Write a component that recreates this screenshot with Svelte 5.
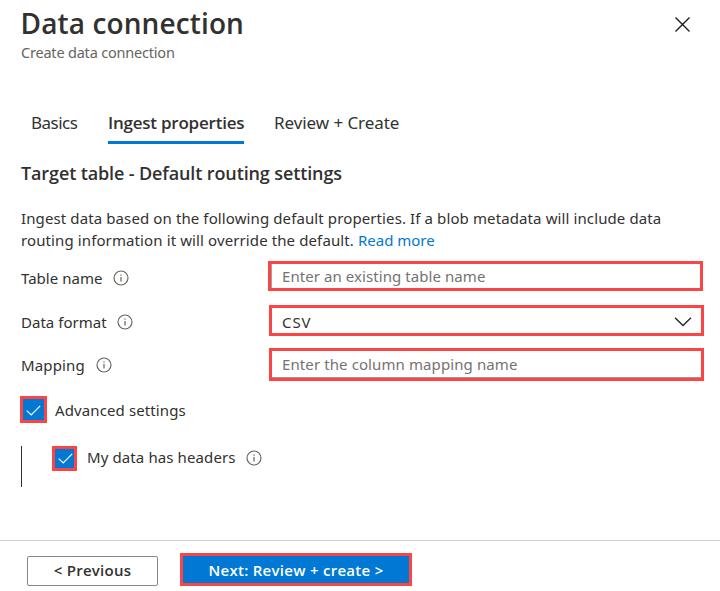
<script>
  const tabs = [
    { id: 'basics', label: 'Basics' },
    { id: 'ingest', label: 'Ingest properties' },
    { id: 'review', label: 'Review + Create' }
  ];
  let active = $state('ingest');
  let advanced = $state(true);
  let headers = $state(true);
</script>

{#snippet info()}
  <svg class="info" width="16" height="16" viewBox="0 0 16 16" aria-hidden="true">
    <circle cx="8" cy="8" r="7" fill="none" stroke="#66645f" stroke-width="1.15" />
    <path d="M8 7v4.5M8 4.5v1.2" stroke="#55534f" stroke-width="1.1" />
  </svg>
{/snippet}

{#snippet check()}
  <svg width="15" height="11" viewBox="0 0 15 11" aria-hidden="true">
    <path d="M.7 5.6l4.5 4.3L14.2.8" fill="none" stroke="#fff" stroke-width="1.2" />
  </svg>
{/snippet}

<main class="panel">
  <header>
    <div>
      <h1>Data connection</h1>
      <p class="subtitle">Create data connection</p>
    </div>
    <button class="close" aria-label="Close">
      <svg width="16" height="17" viewBox="0 0 16 17">
        <path d="M.5 1.5l14 14M14.5 1.5l-14 14" stroke="#1b1a19" stroke-width="1.35" />
      </svg>
    </button>
  </header>

  <nav>
    {#each tabs as tab}
      <button class="tab {tab.id}" class:active={active === tab.id} onclick={() => (active = tab.id)}>{tab.label}</button>
    {/each}
  </nav>

  <section>
    <h2>Target table - Default routing settings</h2>
    <p class="intro">
      Ingest data based on the following default properties. If a blob metadata will include data<br />
      routing information it will override the default. <span class="link">Read more</span>
    </p>

    <div class="row table">
      <div class="label"><span>Table name</span>{@render info()}</div>
      <div class="field"><span class="hint">Enter an existing table name</span></div>
    </div>
    <div class="row format">
      <div class="label"><span>Data format</span>{@render info()}</div>
      <div class="field">
        <span class="value">CSV</span>
        <svg width="18" height="10" viewBox="0 0 18 10" aria-hidden="true">
          <path d="M1 .8l8 7.8 8-7.8" fill="none" stroke="#292827" stroke-width="1.4" />
        </svg>
      </div>
    </div>
    <div class="row mapping">
      <div class="label"><span>Mapping</span>{@render info()}</div>
      <div class="field"><span class="hint">Enter the column mapping name</span></div>
    </div>

    <div class="option advanced">
      <button class="box" aria-label="Advanced settings" onclick={() => (advanced = !advanced)}>
        {#if advanced}{@render check()}{/if}
      </button>
      <span>Advanced settings</span>
    </div>
    <div class="nested">
      <div class="option">
        <button class="box small" aria-label="My data has headers" onclick={() => (headers = !headers)}>
          {#if headers}{@render check()}{/if}
        </button>
        <span>My data has headers</span>{@render info()}
      </div>
    </div>
  </section>

  <footer>
    <button class="previous">&lt; Previous</button>
    <button class="next">Next: Review + create &gt;</button>
  </footer>
</main>

<style>
  :global(body) { margin: 0; background: #fff; }
  * { box-sizing: border-box; }
  .panel {
    width: 720px;
    height: 591px;
    display: flex;
    flex-direction: column;
    overflow: hidden;
    background: #fff;
    color: #323130;
    font: 15px/22px "Noto Sans", "Open Sans", sans-serif;
    letter-spacing: 0.1px;
    white-space: nowrap;
  }
  h1, h2, p { margin: 0; }
  h1, h2, footer { font-family: "Open Sans", "Noto Sans", sans-serif; font-weight: 600; }
  button {
    padding: 0;
    border: 0;
    background: none;
    color: inherit;
    font: inherit;
    letter-spacing: inherit;
  }
  svg { display: block; flex: none; }
  header {
    display: flex;
    justify-content: space-between;
    height: 62px;
    padding: 5px 29px 0 20px;
  }
  h1 { padding-left: 0.5px; font-size: 28px; line-height: 36px; letter-spacing: 0.12px; }
  .subtitle {
    margin: 1px 0 0 1px;
    color: #666462;
    font-size: 14.5px;
    line-height: 20px;
    letter-spacing: -0.2px;
  }
  .close { align-self: flex-start; margin-top: 11px; }
  nav { display: flex; height: 36px; margin: 46px 0 0 31px; }
  .tab {
    height: 36px;
    padding-bottom: 3px;
    border-bottom: 3px solid transparent;
    font-size: 17px;
    line-height: 30px;
    text-align: left;
  }
  .basics { width: 77px; letter-spacing: -0.5px; }
  .ingest { width: 136px; letter-spacing: -0.23px; }
  .review { margin-left: 30px; letter-spacing: -0.07px; }
  .active { border-color: #0078d4; font-family: "Open Sans", "Noto Sans", sans-serif; font-weight: 600; }
  section { flex: 1; padding: 17px 0 0 20px; }
  h2 {
    padding-left: 1px;
    font-size: 18px;
    line-height: 24px;
    letter-spacing: -0.12px;
  }
  .intro { margin: 22px 0 10px 1px; letter-spacing: 0.11px; }
  .link { color: #0078d4; letter-spacing: 0; }
  .row { display: flex; align-items: center; padding-left: 1px; }
  .label { width: 248px; display: flex; align-items: center; gap: 10.5px; letter-spacing: 0.03px; }
  .field {
    width: 435px;
    display: flex;
    align-items: center;
    justify-content: space-between;
    padding: 0 9px 0 10px;
    border: 3px solid #fc4444;
  }
  .hint { color: #757371; letter-spacing: 0.07px; }
  .table .label { width: 247px; padding-top: 4px; }
  .table .field { height: 30px; box-shadow: inset 1px 0 #a3a19f; padding-left: 11px; }
  .format { margin-top: 14px; }
  .format .label { padding-top: 3px; }
  .format .field { height: 31px; }
  .field svg { margin-top: 2px; }
  .value { padding-top: 3px; letter-spacing: 0.9px; }
  .mapping { margin-top: 12px; }
  .mapping .label { padding-top: 1px; gap: 11px; letter-spacing: 0.15px; }
  .mapping .field { height: 33px; padding-bottom: 2px; box-shadow: inset 0 -1px #999795; }
  .mapping .hint { letter-spacing: 0.1px; }
  .option { display: flex; align-items: center; letter-spacing: 0.11px; }
  .advanced { margin-top: 15px; }
  .advanced span { padding-left: 8px; }
  .box {
    width: 27px;
    height: 27px;
    display: flex;
    align-items: center;
    justify-content: center;
    padding-top: 2px;
    border: 3px solid #fc4444;
    background: #0078d4;
  }
  .small { width: 25px; height: 25px; padding: 0 0 0 2px; }
  .nested { height: 41px; margin: 24px 0 0 1px; border-left: 1px solid #323130; }
  .nested .option { margin: -1px 0 0 30px; }
  .nested { position: relative; top: 0; margin-top: 25px; }
  .nested .option { margin-top: -2px; }
  .nested span { padding: 0 10.5px 3px 10px; }
  .nested .info { margin-top: -1px; }
  footer {
    display: flex;
    align-items: flex-start;
    height: 51px;
    padding: 12px 0 0 27px;
    border-top: 1px solid #d2d0ce;
  }
  .previous {
    width: 131px;
    height: 30px;
    margin: 3px 22px 0 0;
    padding-bottom: 2px;
    border: 1px solid #8a8886;
    border-radius: 2px;
    letter-spacing: 0.25px;
  }
  .next {
    width: 232px;
    height: 33px;
    border: 3px solid #fc4444;
    background: #0078d4;
    color: #fff;
    letter-spacing: 0.28px;
  }
</style>
